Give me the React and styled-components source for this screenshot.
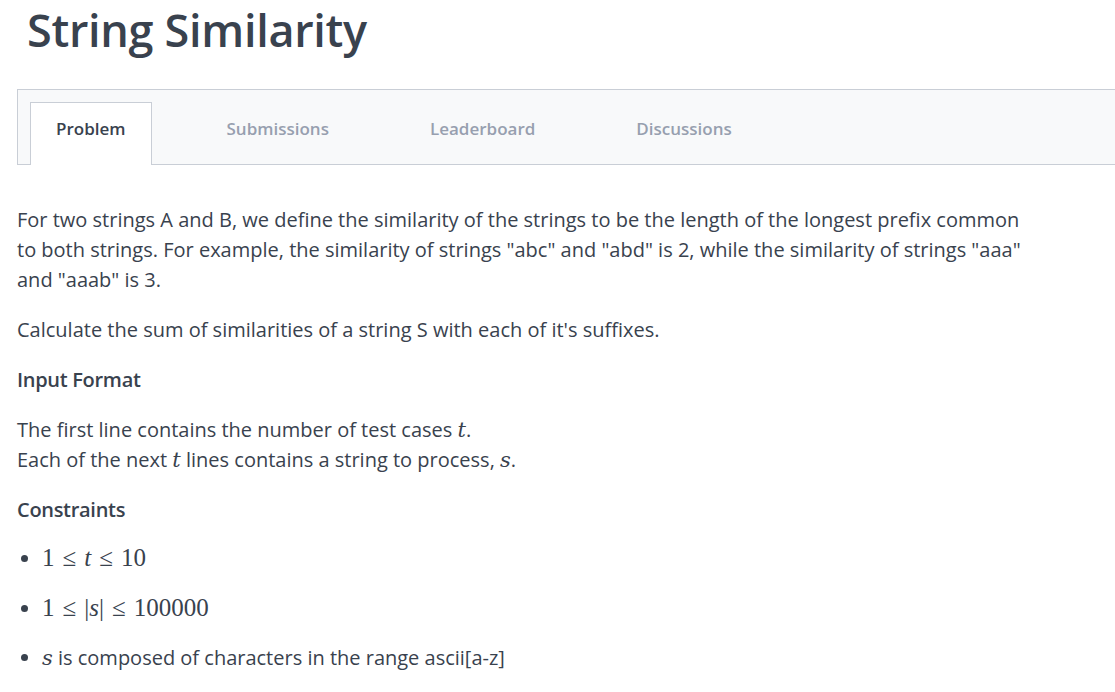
import styled, { createGlobalStyle } from 'styled-components';

const GlobalStyle = createGlobalStyle`
  body {
    margin: 0;
    background: #ffffff;
    font-family: "Open Sans", "Liberation Sans", sans-serif;
    color: #39424e;
  }
`;

const tabs = ['Problem', 'Submissions', 'Leaderboard', 'Discussions'];

const App = () => {
  return (
    <Page>
      <GlobalStyle />
      <Title>String Similarity</Title>
      <TabBar>
        {tabs.map((t, i) => (
          <Tab key={t} $active={i === 0}>{t}</Tab>
        ))}
      </TabBar>
      <Body>
        <Para>
          For two strings A and B, we define the similarity of the strings to be the length of the longest prefix common
          to both strings. For example, the similarity of strings "abc" and "abd" is 2, while the similarity of strings "aaa"
          and "aaab" is 3.
        </Para>
        <Para>Calculate the sum of similarities of a string S with each of it's suffixes.</Para>
        <Heading>Input Format</Heading>
        <Para>
          The first line contains the number of test cases <Var>t</Var>.
          <br />
          Each of the next <Var>t</Var> lines contains a string to process, <Var>s</Var>.
        </Para>
        <Heading $tight>Constraints</Heading>
        <List>
          <Item>
            <Math>1<Rel>≤</Rel><i>t</i><Rel>≤</Rel>10</Math>
          </Item>
          <Item>
            <Math>1<Rel>≤</Rel>|<i>s</i>|<Rel>≤</Rel>100000</Math>
          </Item>
          <Item $last>
            <Var>s</Var> is composed of characters in the range ascii[a-z]
          </Item>
        </List>
      </Body>
    </Page>
  );
};

const Page = styled.div`
  padding: 0 0 0 17px;
`;

const Title = styled.h1`
  margin: 2px 0 32px 10px;
  font-size: 45px;
  line-height: 55px;
  font-weight: 600;
  letter-spacing: -0.3px;
  color: #39424e;
`;

const TabBar = styled.div`
  display: flex;
  gap: 49px;
  padding: 12px 0 0 12px;
  background: #f8f9fa;
  border: 1px solid #c9ced6;
  border-right: none;
  height: 62px;
  box-sizing: content-box;
`;

const Tab = styled.div`
  padding: 14px 25px 0;
  height: 48px;
  font-size: 17px;
  line-height: 24px;
  font-weight: 600;
  color: ${p => (p.$active ? '#39424e' : '#979faf')};
  background: ${p => (p.$active ? '#ffffff' : 'transparent')};
  border: 1px solid ${p => (p.$active ? '#c9ced6' : 'transparent')};
  border-bottom: none;
  margin-bottom: -1px;
  box-sizing: content-box;
`;

const Body = styled.div`
  max-width: 1020px;
  padding-top: 40px;
  font-size: 20px;
  line-height: 30px;
  color: #39424e;
`;

const Para = styled.p`
  margin: 0 0 20px;
`;

const Heading = styled.h3`
  margin: 0 0 ${p => (p.$tight ? '18px' : '20px')};
  font-size: 20px;
  line-height: 30px;
  font-weight: 600;
  letter-spacing: -0.3px;
`;

const Var = styled.span`
  font-family: "DejaVu Serif", "Liberation Serif", serif;
  font-style: italic;
  font-size: 21px;
`;

const Math = styled.span`
  font-family: "Liberation Serif", "DejaVu Serif", serif;
  font-size: 25px;
`;

const Rel = styled.span`
  margin: 0 8px;
`;

const List = styled.ul`
  margin: 0;
  padding-left: 25px;
`;

const Item = styled.li`
  margin-bottom: ${p => (p.$last ? '0' : '19px')};
  line-height: 30px;
`;

export default App;
